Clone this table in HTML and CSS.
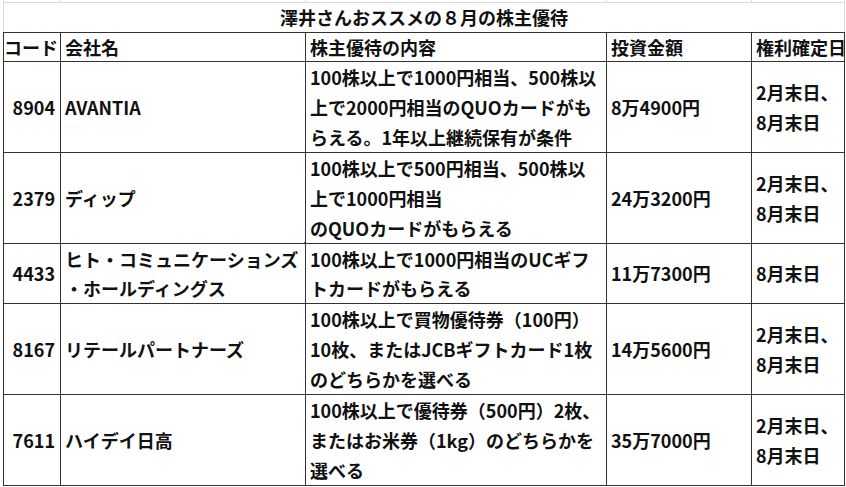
FILE: index.html
```html
<!DOCTYPE html>
<html lang="ja">
<head>
<meta charset="utf-8">
<title>澤井さんおススメの８月の株主優待</title>
<link rel="stylesheet" href="styles.css">
</head>
<body>
<div class="sheet">
<table class="grid">
<colgroup>
<col class="c-code"><col class="c-name"><col class="c-desc"><col class="c-cost"><col class="c-date">
</colgroup>
<tr class="r-top"><td></td><td></td><td></td><td></td><td></td></tr>
<tr class="r-title"><td colspan="5">澤井さんおススメの８月の株主優待</td></tr>
<tr class="r-head">
<th class="code">コード</th><th>会社名</th><th>株主優待の内容</th><th>投資金額</th><th>権利確定日</th>
</tr>
<tr class="r3">
<td class="code">8904</td><td>AVANTIA</td>
<td>100株以上で1000円相当、500株以<br>上で2000円相当のQUOカードがも<br>らえる。1年以上継続保有が条件</td>
<td>8万4900円</td><td>2月末日、<br>8月末日</td>
</tr>
<tr class="r3">
<td class="code">2379</td><td class="selected"><span class="sel-box"></span>ディップ</td>
<td>100株以上で500円相当、500株以<br>上で1000円相当<br>のQUOカードがもらえる</td>
<td>24万3200円</td><td>2月末日、<br>8月末日</td>
</tr>
<tr class="r2">
<td class="code">4433</td><td>ヒト・コミュニケーションズ<br>・ホールディングス</td>
<td>100株以上で1000円相当のUCギフ<br>トカードがもらえる</td>
<td>11万7300円</td><td>8月末日</td>
</tr>
<tr class="r3">
<td class="code">8167</td><td>リテールパートナーズ</td>
<td>100株以上で買物優待券（100円）<br>10枚、またはJCBギフトカード1枚<br>のどちらかを選べる</td>
<td>14万5600円</td><td>2月末日、<br>8月末日</td>
</tr>
<tr class="r3 last">
<td class="code">7611</td><td>ハイデイ日高</td>
<td>100株以上で優待券（500円）2枚、<br>またはお米券（1kg）のどちらかを<br>選べる</td>
<td>35万7000円</td><td>2月末日、<br>8月末日</td>
</tr>
</table>
</div>
</body>
</html>
```
FILE: styles.css
```css
html, body {
  margin: 0;
  background: #ffffff;
}
body {
  font-family: "Noto Sans CJK JP", "Noto Sans", sans-serif;
  font-weight: 700;
  color: #111111;
  font-size: 18px;
}
.sheet {
  padding-left: 3px;
}
.grid {
  border-collapse: collapse;
  table-layout: fixed;
  width: 841px;
}
.c-code { width: 57px; }
.c-name { width: 245px; }
.c-desc { width: 301px; }
.c-cost { width: 145px; }
.c-date { width: 93px; }

.grid td, .grid th {
  border: 1px solid #333333;
  padding: 0 0 0 4px;
  vertical-align: middle;
  text-align: left;
  white-space: nowrap;
  overflow: hidden;
  font-weight: 700;
  line-height: 30px;
}
.grid .code {
  text-align: right;
  padding: 0 5px 0 0;
}
.r-top td {
  height: 2px;
  padding: 0;
  line-height: 0;
  border-top: none;
  border-left: 1px solid #dadada;
  border-right: 1px solid #dadada;
  border-bottom: 1px solid #dadada;
}
.r-title td {
  height: 29px;
  line-height: 29px;
  text-align: center;
  padding: 0;
  border-left: 1px solid #dadada;
  border-right: 1px solid #dadada;
  border-top: 1px solid #dadada;
  border-bottom: 1px solid #333333;
  font-weight: 700;
}
.r-head th {
  height: 28px;
  line-height: 28px;
}
.r3 td { height: 90px; }
.r2 td { height: 59px; }
.r2 td { line-height: 29px; }
.r3.last td { height: 89px; }

.selected {
  position: relative;
}
.sel-box {
  position: absolute;
  left: -1px;
  top: -1px;
  right: -1px;
  bottom: -1px;
  border: 1px solid #2f6f45;
  pointer-events: none;
}
.sel-box::after {
  content: "";
  position: absolute;
  right: -3px;
  bottom: -3px;
  width: 5px;
  height: 5px;
  background: #2f6f45;
  border: 1px solid #ffffff;
  box-sizing: border-box;
}
```
